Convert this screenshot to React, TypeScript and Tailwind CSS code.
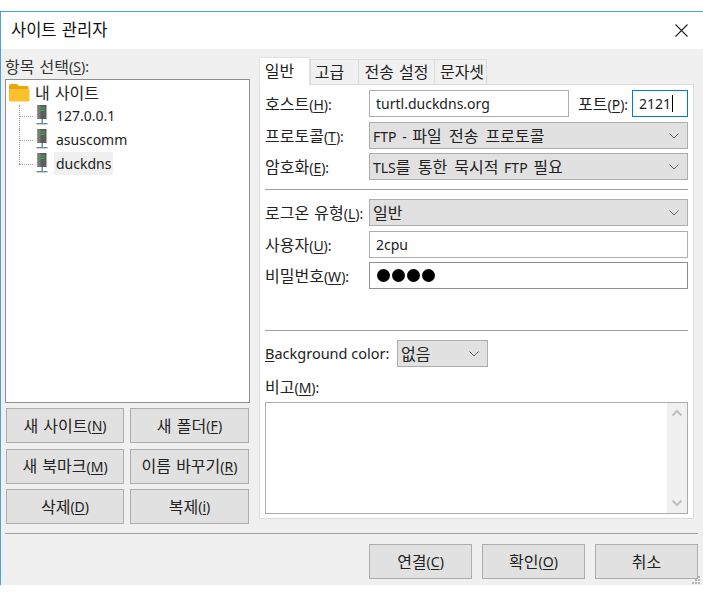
import React from "react";

const K = ({ children, wide }: { children: React.ReactNode; wide?: boolean }) => (
  <span className={`text-[16px] ${wide ? "[word-spacing:3px]" : "[word-spacing:1px]"}`}>{children}</span>
);

const Key = ({ u, tail = ")" }: { u: string; tail?: string }) => (
  <span className="text-[14px]">(<span className="underline underline-offset-2 decoration-1">{u}</span>{tail}</span>
);

const Chevron = () => (
  <svg width="12" height="8" viewBox="0 0 12 8" className="shrink-0">
    <path d="M1.5 1.5 L6 6 L10.5 1.5" fill="none" stroke="#606060" strokeWidth="1" />
  </svg>
);

const Server = () => (
  <svg width="14" height="22" viewBox="0 0 14 22" className="shrink-0">
    <rect x="2.5" y="0" width="9" height="14" fill="#5c5c5c" />
    <rect x="2.5" y="0" width="3" height="14" fill="#7a7a7a" />
    <rect x="4" y="2.5" width="6" height="1" fill="#3fb54a" />
    <rect x="4" y="5" width="6" height="1" fill="#3fb54a" />
    <rect x="6.5" y="14" width="1.4" height="5" fill="#6b8aa0" />
    <rect x="1.5" y="18" width="11" height="1.4" fill="#6b8aa0" />
  </svg>
);

const Folder = () => (
  <svg width="22" height="18" viewBox="0 0 22 18" className="shrink-0">
    <path d="M0 2 Q0 0 2 0 H8 L10 2 H18 Q19.5 2 19.5 4 V6 H0 Z" fill="#e8a70f" />
    <path d="M0 5 H20 Q20.5 5 20.5 6 V16 Q20.5 17.5 19 17.5 H1.5 Q0 17.5 0 16 Z" fill="#fcc02c" />
  </svg>
);

const Btn = ({ children, className = "" }: { children: React.ReactNode; className?: string }) => (
  <div className={`h-[35px] flex items-center justify-center bg-[#e1e1e1] border border-[#adadad] text-[#222] ${className}`}>{children}</div>
);

const Label = ({ children, className = "w-[104px]" }: { children: React.ReactNode; className?: string }) => (
  <div className={`shrink-0 whitespace-nowrap text-[#222] ${className}`}>{children}</div>
);

const Select = ({ children, className = "flex-1" }: { children: React.ReactNode; className?: string }) => (
  <div className={`h-[27px] flex items-center justify-between bg-[#e1e1e1] border border-[#adadad] pl-[3px] pr-[7px] text-[14px] text-[#222] [word-spacing:2px] ${className}`}>
    <span className="whitespace-nowrap">{children}</span>
    <Chevron />
  </div>
);

const Input = ({ children, className = "flex-1", border = "border-[#acacac]" }: { children?: React.ReactNode; className?: string; border?: string }) => (
  <div className={`h-[27px] flex items-center bg-white border ${border} pl-[6px] text-[14px] text-[#222] ${className}`}>{children}</div>
);

const Node = ({ name, selected, last }: { name: string; selected?: boolean; last?: boolean }) => (
  <div className="h-[24px] flex items-center relative pl-[29px] pb-[3px]">
    <div className={`absolute left-[13px] top-0 border-l border-dotted border-[#999] ${last ? "h-[11px]" : "h-[24px]"}`} />
    <div className="absolute left-[13px] top-[11px] w-[14px] border-t border-dotted border-[#999]" />
    <Server />
    <span className={`ml-[5px] px-[2px] h-[23px] flex items-center text-[14px] text-[#222] ${selected ? "bg-[#f0f0f0]" : ""}`}>{name}</span>
  </div>
);

export default function App() {
  return (
    <div className="w-[703px] h-[596px] bg-white pt-[11px] overflow-hidden" style={{ fontFamily: '"Noto Sans", "Noto Sans CJK KR", sans-serif' }}>
      <div className="h-[574px] border-t border-l border-[#4ba3d3] flex flex-col">
        <div className="h-[37px] shrink-0 bg-white flex items-center justify-between pl-[10px] pr-[15px]">
          <span className="text-[16.5px] text-[#111] [word-spacing:1px]">사이트 관리자</span>
          <svg width="13" height="13" viewBox="0 0 13 13"><path d="M0.5 0.5 L12.5 12.5 M12.5 0.5 L0.5 12.5" stroke="#222" strokeWidth="1.1" /></svg>
        </div>
        <div className="flex-1 bg-[#f0f0f0] flex flex-col px-[4px] relative">
          <div className="flex gap-[9px] pt-[5px] h-[478px] shrink-0">
            <div className="w-[245px] shrink-0 flex flex-col">
              <div className="h-[25px] flex items-center text-[#333]"><K>항목 선택</K><Key u="S" tail="):" /></div>
              <div className="h-[324px] bg-white border border-[#8f8f8f] pt-[1px]">
                <div className="h-[24px] flex items-center pl-[3px]">
                  <Folder />
                  <span className="ml-[4px] text-[#222]"><K>내 사이트</K></span>
                </div>
                <Node name="127.0.0.1" />
                <Node name="asuscomm" />
                <Node name="duckdns" selected last />
              </div>
              <div className="grid grid-cols-[118px_119px] gap-x-[6px] gap-y-[5.5px] mt-[5px] pl-[1px]">
                <Btn><K>새 사이트</K><Key u="N" /></Btn>
                <Btn><K>새 폴더</K><Key u="F" /></Btn>
                <Btn><K>새 북마크</K><Key u="M" /></Btn>
                <Btn><K>이름 바꾸기</K><Key u="R" /></Btn>
                <Btn><K>삭제</K><Key u="D" /></Btn>
                <Btn><K>복제</K><Key u="i" /></Btn>
              </div>
            </div>
            <div className="w-[435px] shrink-0 flex flex-col pt-[3px]">
              <div className="flex items-end h-[28px] text-[#222] relative z-10">
                <div className="w-[51px] h-[28px] bg-white border border-b-0 border-[#e3e3e3] flex items-center justify-center pb-[2px] pr-[10px]"><K>일반</K></div>
                <div className="w-[49px] h-[26px] bg-[#f0f0f0] border border-[#dcdcdc] flex items-center justify-center pr-[10px]"><K>고급</K></div>
                <div className="w-[76px] h-[26px] bg-[#f0f0f0] border border-l-0 border-[#dcdcdc] flex items-center justify-center"><K>전송 설정</K></div>
                <div className="w-[52px] h-[26px] bg-[#f0f0f0] border border-l-0 border-[#dcdcdc] flex items-center justify-center pl-[3px]"><K>문자셋</K></div>
              </div>
              <div className="h-[435px] bg-white border border-[#dcdcdc] -mt-px px-[5px] pt-[5px] flex flex-col">
                <div className="flex items-center h-[27px]">
                  <Label><K>호스트</K><Key u="H" tail="):" /></Label>
                  <Input className="w-[200px] pb-[1px]">turtl.duckdns.org</Input>
                  <Label className="ml-[9px] w-[54px]"><K>포트</K><Key u="P" tail="):" /></Label>
                  <Input className="w-[56px] pb-[1px]" border="border-[#0078d7]">2121<span className="inline-block w-px h-[17px] bg-black ml-px" /></Input>
                </div>
                <div className="flex items-center mt-[5px]">
                  <Label><K>프로토콜</K><Key u="T" tail="):" /></Label>
                  <Select>FTP - <K wide>파일 전송 프로토콜</K></Select>
                </div>
                <div className="flex items-center mt-[4px]">
                  <Label><K>암호화</K><Key u="E" tail="):" /></Label>
                  <Select>TLS<K wide>를 통한 묵시적</K> FTP <K>필요</K></Select>
                </div>
                <div className="border-t border-[#a0a0a0] mt-[9px] mb-[9px]" />
                <div className="flex items-center">
                  <Label><K>로그온 유형</K><Key u="L" tail="):" /></Label>
                  <Select><K>일반</K></Select>
                </div>
                <div className="flex items-center mt-[5px]">
                  <Label><K>사용자</K><Key u="U" tail="):" /></Label>
                  <Input>2cpu</Input>
                </div>
                <div className="flex items-center mt-[4px]">
                  <Label><K>비밀번호</K><Key u="W" tail="):" /></Label>
                  <Input border="border-[#8f8f8f]">
                    <span className="flex gap-[2px] ml-[1px]">
                      <i className="block w-[13px] h-[13px] rounded-full bg-black" />
                      <i className="block w-[13px] h-[13px] rounded-full bg-black" />
                      <i className="block w-[13px] h-[13px] rounded-full bg-black" />
                      <i className="block w-[13px] h-[13px] rounded-full bg-black" />
                    </span>
                  </Input>
                </div>
                <div className="border-t border-[#a0a0a0] mt-[41px] mb-[9px]" />
                <div className="flex items-center">
                  <Label className="w-[132px] text-[14.5px]"><span className="underline underline-offset-2 decoration-1">B</span>ackground color:</Label>
                  <Select className="w-[91px]"><K>없음</K></Select>
                </div>
                <div className="h-[20px] flex items-center mt-[10px] text-[#222]"><K>비고</K><Key u="M" tail="):" /></div>
                <div className="h-[112px] mt-[5px] bg-white border border-[#acacac] flex justify-end">
                  <div className="w-[20px] bg-[#f0f0f0] flex flex-col justify-between items-center py-[6px]">
                    <svg width="12" height="8" viewBox="0 0 12 8"><path d="M1.5 6.5 L6 2 L10.5 6.5" fill="none" stroke="#c0c0c0" strokeWidth="2" /></svg>
                    <svg width="12" height="8" viewBox="0 0 12 8"><path d="M1.5 1.5 L6 6 L10.5 1.5" fill="none" stroke="#c0c0c0" strokeWidth="2" /></svg>
                  </div>
                </div>
              </div>
            </div>
          </div>
          <div className="border-t border-[#a0a0a0] mt-[6px] mr-[1px]" />
          <div className="flex justify-end gap-[10px] mt-[10px] pr-[1px]">
            <Btn className="w-[103px]"><K>연결</K><Key u="C" /></Btn>
            <Btn className="w-[103px]"><K>확인</K><Key u="O" /></Btn>
            <Btn className="w-[103px]"><K>취소</K></Btn>
          </div>
          <svg width="10" height="10" viewBox="0 0 10 10" className="absolute right-[2px] bottom-0">
            <g fill="#b5b5b5">
              <rect x="7" y="1" width="2" height="2" />
              <rect x="4" y="4" width="2" height="2" />
              <rect x="7" y="4" width="2" height="2" />
              <rect x="1" y="7" width="2" height="2" />
              <rect x="4" y="7" width="2" height="2" />
              <rect x="7" y="7" width="2" height="2" />
            </g>
          </svg>
        </div>
      </div>
    </div>
  );
}
